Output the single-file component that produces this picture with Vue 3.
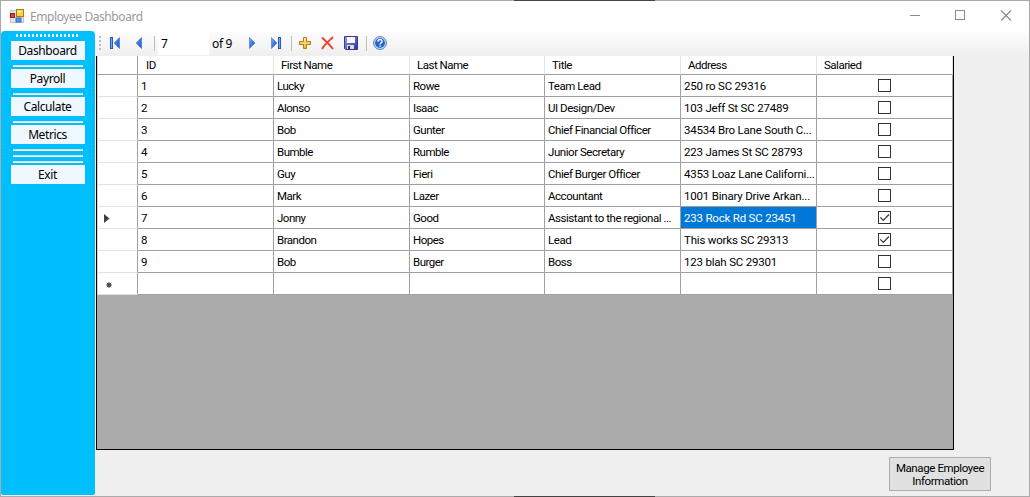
<script setup>
const columns = ['ID', 'First Name', 'Last Name', 'Title', 'Address', 'Salaried']
const rows = [
  ['1', 'Lucky', 'Rowe', 'Team Lead', '250 ro SC 29316', false],
  ['2', 'Alonso', 'Isaac', 'UI Design/Dev', '103 Jeff St SC 27489', false],
  ['3', 'Bob', 'Gunter', 'Chief Financial Officer', '34534 Bro Lane South C...', false],
  ['4', 'Bumble', 'Rumble', 'Junior Secretary', '223 James St SC 28793', false],
  ['5', 'Guy', 'Fieri', 'Chief Burger Officer', '4353 Loaz Lane Californi...', false],
  ['6', 'Mark', 'Lazer', 'Accountant', '1001 Binary Drive Arkan...', false],
  ['7', 'Jonny', 'Good', 'Assistant to the regional ...', '233 Rock Rd SC 23451', true],
  ['8', 'Brandon', 'Hopes', 'Lead', 'This works SC 29313', true],
  ['9', 'Bob', 'Burger', 'Boss', '123 blah SC 29301', false],
  ['', '', '', '', '', false],
]
const menu = [
  { label: 'Dashboard', rules: 1 },
  { label: 'Payroll', rules: 1 },
  { label: 'Calculate', rules: 1 },
  { label: 'Metrics', rules: 3 },
  { label: 'Exit', rules: 0 },
]
</script>

<template>
  <div class="window">
    <header class="titlebar">
      <svg class="appicon" width="14" height="14" viewBox="0 0 14 14">
        <rect x=".5" y="1.500" width="13" height="12" fill="#e4e4e4" stroke="#c4c4c4" />
        <rect x="6.500" y=".5" width="7" height="7" fill="#f9cf45" stroke="#a97d16" />
        <path d="M7.500 1.500h4v2h-4z" fill="#fff0a0" />
        <rect x=".5" y="4.500" width="4" height="4" fill="#dd4434" stroke="#9c1d1d" />
        <rect x="6" y="9" width="5" height="4" fill="#5b96e6" stroke="#326bc0" />
      </svg>
      <span class="caption">Employee Dashboard</span>
      <svg class="controls" width="104" height="12" viewBox="0 0 104 12" fill="none" stroke="#8c8c8c">
        <path d="M0 5.500h10" />
        <rect x="45.500" y=".5" width="9" height="9" />
        <path d="M91 0.500l10 10M101 0.500l-10 10" stroke-width="1.200" />
      </svg>
    </header>

    <div class="body">
      <nav class="sidebar">
        <div class="grip"></div>
        <template v-for="item in menu" :key="item.label">
          <button class="item">{{ item.label }}</button>
          <div v-if="item.rules" class="rules">
            <i v-for="n in item.rules" :key="n"></i>
          </div>
        </template>
      </nav>

      <main class="main">
        <div class="toolbar">
          <svg class="tools" width="65" height="25" viewBox="0 0 65 25">
            <defs>
              <linearGradient id="blue" x1="0" y1="0" x2="1" y2="1">
                <stop offset="0" stop-color="#86b4f5" /><stop offset=".5" stop-color="#3d78e4" /><stop offset="1" stop-color="#1746b8" />
              </linearGradient>
            </defs>
            <path d="M4 5h2v2H4zM4 9h2v2H4zM4 13h2v2H4zM4 17h2v2H4z" fill="#bebebe" />
            <rect x="15.500" y="6.500" width="2" height="11" fill="#70a7ef" stroke="#2459c4" />
            <path d="M24.500 6.500v11L19 12z" fill="url(#blue)" stroke="#3d72d9" stroke-width=".6" />
            <path d="M46.500 6.500v11L41 12z" fill="url(#blue)" stroke="#3d72d9" stroke-width=".6" />
            <path d="M59.500 5v15" stroke="#bdbdbd" />
          </svg>
          <div class="position">7</div>
          <span class="count">of 9</span>
          <svg class="tools" width="160" height="25" viewBox="240 31 160 25">
            <defs>
              <linearGradient id="gold" x1="0" y1="0" x2="0" y2="1">
                <stop offset="0" stop-color="#fff0a0" /><stop offset="1" stop-color="#edb426" />
              </linearGradient>
              <linearGradient id="disk" x1="0" y1="0" x2="1" y2="1">
                <stop offset="0" stop-color="#8fa6e8" /><stop offset="1" stop-color="#2c2c94" />
              </linearGradient>
            </defs>
            <path d="M239.500 36v15M291.500 36v15M366.500 36v15" stroke="#bdbdbd" />
            <path d="M249.500 37.500v11l5.500-5.500z" fill="url(#blue)" stroke="#3d72d9" stroke-width=".6" />
            <path d="M271.500 37.500v11l5.500-5.500z" fill="url(#blue)" stroke="#3d72d9" stroke-width=".6" />
            <rect x="278.500" y="37.500" width="2" height="11" fill="#70a7ef" stroke="#2459c4" />
            <path d="M303.500 37.500h3v4h4v3h-4v4h-3v-4h-4v-3h4z" fill="url(#gold)" stroke="#b37b10" />
            <path d="M322 37.500c3 3 7 6 11 11.500M333 37c-4 4-8 7-11 12" fill="none" stroke="#ef4129" stroke-width="1.900" />
            <path d="M344.500 36.500h13v13h-12l-1-1z" fill="url(#disk)" stroke="#36389c" />
            <rect x="347" y="37" width="8" height="6" fill="#f4f6fb" />
            <rect x="347" y="45" width="7" height="4" fill="#d9dbe4" />
            <rect x="348" y="46" width="2" height="3" fill="#292983" />
            <circle cx="380" cy="43" r="6.400" fill="#dce9fc" stroke="#4876bd" stroke-width="1" />
            <circle cx="380" cy="43" r="5" fill="#2b66cc" />
            <path d="M377.900 41.700c0-3 4.400-2.800 4.200-.2c0 1.400-2 1.300-2 3" fill="none" stroke="#fff" stroke-width="1.300" />
            <path d="M379.400 45.400h1.400v1.300h-1.400z" fill="#fff" />
          </svg>
        </div>

        <div class="grid">
          <div class="row head">
            <div class="rowhead"></div>
            <div v-for="c in columns" :key="c" class="cell">{{ c }}</div>
          </div>
          <div v-for="(row, r) in rows" :key="r" class="row">
            <div class="rowhead">
              <svg v-if="r === 6" width="6" height="9" viewBox="0 0 6 9"><path d="M0 0l5.500 4.500L0 9z" fill="#404040" /></svg>
              <svg v-if="r === 9" class="star" width="6" height="6" viewBox="0 0 6 6"><path d="M3 0v6M0 3h6M.8.8l4.400 4.400M5.200.8L.8 5.200" stroke="#505050" /><circle cx="3" cy="3" r="2" fill="#505050" /></svg>
            </div>
            <div v-for="(value, c) in row" :key="c" class="cell" :class="{ selected: r === 6 && c === 4, title: c === 3, address: c === 4, check: c === 5 }">
              <svg v-if="c === 5" width="13" height="13" viewBox="0 0 13 13" fill="none" stroke="#333">
                <rect x=".5" y=".5" width="12" height="12" fill="#fff" />
                <path v-if="value" d="M2.300 6.300l3 3L11 3.500" stroke-width="1.200" />
              </svg>
              <template v-else>{{ value }}</template>
            </div>
          </div>
        </div>

        <footer class="footer">
          <button class="manage">Manage Employee Information</button>
        </footer>
      </main>
    </div>
  </div>
</template>

<style>
body { overflow: hidden; }
</style>

<style scoped>
* { box-sizing: border-box; }
button { appearance: none; border: 0; margin: 0; padding: 0; color: #000; border-radius: 0; }
svg { display: block; flex: none; }
.window {
  width: 1030px; height: 497px; padding: 1px;
  background:
    linear-gradient(#efefef, #efefef) content-box,
    linear-gradient(90deg, #aaa 514px, #444 514px 655px, #aaa 655px);
  display: flex; flex-direction: column; font: 12px "Noto Sans", sans-serif; color: #000;
}
.titlebar { height: 30px; flex: none; background: #fff; display: flex; align-items: center; padding: 0 15px 0 9px; }
.caption { margin-left: 6px; color: #999; letter-spacing: -0.42px; flex: 1; }
.body { flex: 1; display: flex; min-height: 0; }
.sidebar {
  width: 94px; height: 464px; background: #00bfff; border-radius: 4px 4px 2px 2px;
  display: flex; flex-direction: column; align-items: center; padding: 3px 0 0 0;
}
.grip {
  width: 64px; height: 3px; margin-bottom: 4px; flex: none;
  background: repeating-linear-gradient(90deg, #e8f4f8 0 2px, transparent 2px 4px);
}
.item { width: 74px; height: 19px; flex: none; background: #f0f8ff; font: 12px/19px "Noto Sans", sans-serif; letter-spacing: -0.4px; padding-right: 1px; }
.rules { width: 70px; padding: 5px 0 2px; display: flex; flex-direction: column; gap: 4px; }
.rules i { height: 2px; background: #fff; border-top: 1px solid #d5dde2; }
.main { flex: 1; min-width: 0; display: flex; flex-direction: column; }
.toolbar { height: 25px; flex: none; background: linear-gradient(#fdfdfd, #efefef); display: flex; align-items: center; }
.position { width: 51px; height: 23px; margin-left: -2px; background: #fff; padding-left: 3px; line-height: 23px; }
.count { width: 31px; padding-left: 3px; white-space: nowrap; letter-spacing: -0.35px; }
.grid {
  margin-left: 1px; width: 858px; height: 394px; flex: none; background: #ababab;
  border: solid #000; border-width: 0 1px 1px; box-shadow: -1px 0 #fff;
  font-family: Roboto, "Liberation Sans", sans-serif; font-size: 11.5px; letter-spacing: -0.5px;
}
.row { display: grid; grid-template-columns: 41px 136px 136px 135px 136px 136px 136px; height: 22px; }
.head { height: 19px; }
.rowhead { background: #fff; border-right: 1px solid #a0a0a0; border-bottom: 1px solid #e3e3e3; border-left: 1px solid #d0d0d0; padding: 1px 0 0 6px; display: flex; align-items: center; }
.star { margin: 2px 0 0 2px; }
.cell {
  background: #fff; border: solid #a0a0a0; border-width: 0 1px 1px 0; line-height: 22px; padding-left: 3px;
  white-space: nowrap; overflow: hidden;
}
.title { letter-spacing: -0.45px; }
.address { letter-spacing: -0.2px; }
.head > div { border-bottom-color: #a0a0a0; }
.head .cell { padding-left: 7px; line-height: 19px; border-right-color: #e3e3e3; }
.head .cell:nth-child(2) { padding-left: 8px; }
.selected { background: #0078d7; color: #fff; }
.check { padding: 4px 0 0 61px; }
.footer { flex: 1; padding: 7px 38px 0 0; display: flex; justify-content: flex-end; }
.manage {
  width: 102px; height: 34px; background: #e1e1e1; border: 1px solid #adadad; padding-top: 1px;
  font: 11.5px/13px Roboto, "Liberation Sans", sans-serif; letter-spacing: -0.4px;
}
</style>
